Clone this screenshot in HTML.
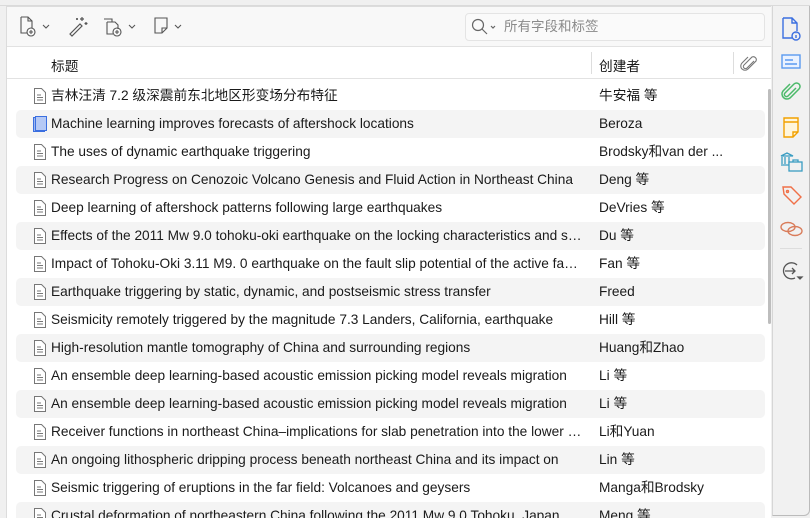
<!DOCTYPE html>
<html><head><meta charset="utf-8"><style>
*{margin:0;padding:0;box-sizing:border-box}
html,body{width:810px;height:518px;overflow:hidden}
body{background:#f0f0f0;font-family:"Liberation Sans","Noto Sans CJK SC",sans-serif;font-size:13.7px;color:#1a1a1a;position:relative}
#main{position:absolute;left:6px;top:6px;width:765px;height:512px;background:#fff;border-left:1px solid #dcdcdc;border-top:1px solid #dcdcdc;overflow:hidden}
#tb{position:absolute;left:0;top:0;width:765px;height:40px;background:#f8f8f8;border-bottom:1px solid #e2e2e2}
#search{position:absolute;left:458px;top:6px;width:300px;height:28px;border:1px solid #e4e4e4;border-radius:4px;background:#fafafa;color:#8a8a8a;font-size:13.5px;line-height:26px;padding-left:38px}
#hdr{position:absolute;left:0;top:41px;width:765px;height:31px;border-bottom:1px solid #e2e2e2}
.row{position:absolute;left:9px;width:749px;height:28px;line-height:28px;border-radius:5px}
.alt{background:#f4f4f4}
.t{position:absolute;left:35px;width:532px;white-space:nowrap;overflow:hidden;text-overflow:ellipsis}
.c{position:absolute;left:583px;white-space:nowrap}
.ic{position:absolute;left:17px;top:6px}
#side{position:absolute;left:772px;top:6px;width:38px;height:510px;background:#f1f1f1;border-left:1px solid #d6d6d6;border-right:1px solid #bbb;border-bottom:1px solid #bbb;border-bottom-right-radius:6px}
#sb{position:absolute;left:761px;top:82px;width:3px;height:235px;background:#bdbdbd;border-radius:2px}
</style></head><body>
<div style="position:absolute;left:0;top:5px;width:810px;height:1px;background:#dadada"></div>
<div id="main">
<div id="tb">
<svg style="position:absolute;left:12px;top:9px" width="34" height="22" viewBox="0 0 34 22" fill="none" stroke="#555" stroke-width="1.1"><path d="M2 1h7l4 4v7M2 1v16h6M9 1v4h4"/><circle cx="12" cy="16" r="4"/><path d="M12 14v4M10 16h4M24 9l3 3 3-3"/></svg>
<svg style="position:absolute;left:60px;top:8px" width="22" height="22" viewBox="0 0 22 22" fill="none" stroke="#555" stroke-width="1.2"><path d="M3 19L13 9l2 2L5 21z"/><path d="M15 2v4M13 4h4M19 7v3M17.5 8.5h3M10 3v2M9 4h2"/></svg>
<svg style="position:absolute;left:96px;top:9px" width="40" height="22" viewBox="0 0 40 22" fill="none" stroke="#555" stroke-width="1.1"><path d="M1 3h8v3M4 6h8l3 3v4M4 6v12h6"/><circle cx="14" cy="16" r="4"/><path d="M14 14v4M12 16h4M26 9l3 3 3-3"/></svg>
<svg style="position:absolute;left:146px;top:9px" width="34" height="22" viewBox="0 0 34 22" fill="none" stroke="#555" stroke-width="1.1"><path d="M2 2h12v10l-5 5H2zM9 17v-5h5"/><path d="M22 9l3 3 3-3"/></svg>
<div id="search">所有字段和标签</div>
<svg style="position:absolute;left:464px;top:11px" width="30" height="18" viewBox="0 0 30 18" fill="none" stroke="#666" stroke-width="1.2"><circle cx="7" cy="7" r="5.5"/><path d="M11 11l5 5M20 8l2 2 2-2"/></svg>
</div>
<div id="hdr">
<span style="position:absolute;left:44px;top:7px">标题</span>
<div style="position:absolute;left:584px;top:4px;width:1px;height:22px;background:#ddd"></div>
<span style="position:absolute;left:592px;top:7px">创建者</span>
<div style="position:absolute;left:726px;top:4px;width:1px;height:22px;background:#ddd"></div>
<svg style="position:absolute;left:733px;top:7px" width="18" height="18" viewBox="0 0 18 18" fill="none" stroke="#777" stroke-width="1.1"><path d="M14 6l-7 7a2 2 0 01-3-3l8-8a3 3 0 014 4l-8 8a4 4 0 01-6-6l6-6"/></svg>
</div>
<div id="sb"></div>
<div id="rows"></div>
</div>
<div id="side">
<svg style="position:absolute;left:7px;top:10px" width="24" height="26" viewBox="0 0 24 26" fill="none" stroke="#3b6fe0" stroke-width="1.4"><path d="M3 2h9l5 5v8M3 2v20h9M12 2v5h5"/><circle cx="16" cy="20" r="4"/><path d="M16 19v3M16 17.5v.3"/></svg>
<svg style="position:absolute;left:7px;top:46px" width="24" height="20" viewBox="0 0 24 20" fill="#eaf2ff" stroke="#5a9af0" stroke-width="1.4"><rect x="2" y="3" width="18" height="13"/><path d="M5 8h8M5 12h12" fill="none"/></svg>
<svg style="position:absolute;left:7px;top:76px" width="24" height="22" viewBox="0 0 24 22" fill="none" stroke="#4cba6a" stroke-width="1.5"><path d="M16 6l-8 8a2 2 0 01-3-3l9-9a3.5 3.5 0 015 5l-9 9a5 5 0 01-7-7l7-7"/></svg>
<svg style="position:absolute;left:7px;top:110px" width="24" height="24" viewBox="0 0 24 24" fill="#fff6dd" stroke="#f2a100" stroke-width="1.4"><path d="M4 2h14v14l-5 5H4zM4 6h14M13 21v-5h5"/></svg>
<svg style="position:absolute;left:6px;top:144px" width="26" height="24" viewBox="0 0 26 24" fill="none" stroke="#3a9dc2" stroke-width="1.3"><path d="M2 6l6-3 6 3zM3 7v7M6 7v7M10 7v7M2 15h8"/><rect x="10" y="12" width="13" height="9" fill="#f1f1f1"/><path d="M14 12v-2h5v2"/></svg>
<svg style="position:absolute;left:7px;top:178px" width="24" height="22" viewBox="0 0 24 22" fill="none" stroke="#f07048" stroke-width="1.4"><path d="M3 3h8l10 10-7 7L4 10z"/><circle cx="7.5" cy="7.5" r="1"/></svg>
<svg style="position:absolute;left:6px;top:214px" width="26" height="18" viewBox="0 0 26 18" fill="none" stroke="#d97c5a" stroke-width="1.4"><ellipse cx="9" cy="7" rx="7" ry="4.5"/><ellipse cx="16" cy="11" rx="7" ry="4.5"/></svg>
<div style="position:absolute;left:7px;top:242px;width:22px;height:1px;background:#ddd"></div>
<svg style="position:absolute;left:7px;top:254px" width="24" height="24" viewBox="0 0 24 24" fill="none" stroke="#555" stroke-width="1.3"><path d="M17 5a8 8 0 10-2 13"/><path d="M5 11h10M12 8l3 3-3 3"/><path d="M18 17l2 2 2-2z" fill="#555"/></svg>
</div>
<script>
var d=[["吉林汪清 7.2 级深震前东北地区形变场分布特征","牛安福 等"],["Machine learning improves forecasts of aftershock locations","Beroza"],["The uses of dynamic earthquake triggering","Brodsky和van der ..."],["Research Progress on Cenozoic Volcano Genesis and Fluid Action in Northeast China","Deng 等"],["Deep learning of aftershock patterns following large earthquakes","DeVries 等"],["Effects of the 2011 Mw 9.0 tohoku-oki earthquake on the locking characteristics and seismic risk","Du 等"],["Impact of Tohoku-Oki 3.11 M9. 0 earthquake on the fault slip potential of the active faults","Fan 等"],["Earthquake triggering by static, dynamic, and postseismic stress transfer","Freed"],["Seismicity remotely triggered by the magnitude 7.3 Landers, California, earthquake","Hill 等"],["High-resolution mantle tomography of China and surrounding regions","Huang和Zhao"],["An ensemble deep learning-based acoustic emission picking model reveals migration","Li 等"],["An ensemble deep learning-based acoustic emission picking model reveals migration","Li 等"],["Receiver functions in northeast China–implications for slab penetration into the lower mantle","Li和Yuan"],["An ongoing lithospheric dripping process beneath northeast China and its impact on","Lin 等"],["Seismic triggering of eruptions in the far field: Volcanoes and geysers","Manga和Brodsky"],["Crustal deformation of northeastern China following the 2011 Mw 9.0 Tohoku, Japan","Meng 等"]];
var doc='<svg class="ic" width="14" height="16" viewBox="0 0 14 16" fill="none" stroke="#777" stroke-width="1"><path d="M1.5 .5h7l4 4v11h-11z" fill="#fff"/><path d="M4 7h4M4 9.5h6M4 12h6"/></svg>';
var book='<svg class="ic" width="14" height="16" viewBox="0 0 14 16"><rect x=".5" y="1.5" width="11" height="14" fill="#9fb8ef" stroke="#3b6fe0"/><rect x="2.5" y=".5" width="11" height="14" fill="#b5c9f5" stroke="#3b6fe0"/></svg>';
var h='';for(var i=0;i<d.length;i++){h+='<div class="row'+(i%2?' alt':'')+'" style="top:'+(75+28*i)+'px">'+(i==1?book:doc)+'<span class="t">'+d[i][0]+'</span><span class="c">'+d[i][1]+'</span></div>';}
document.getElementById('rows').innerHTML=h;
</script>
</body></html>
